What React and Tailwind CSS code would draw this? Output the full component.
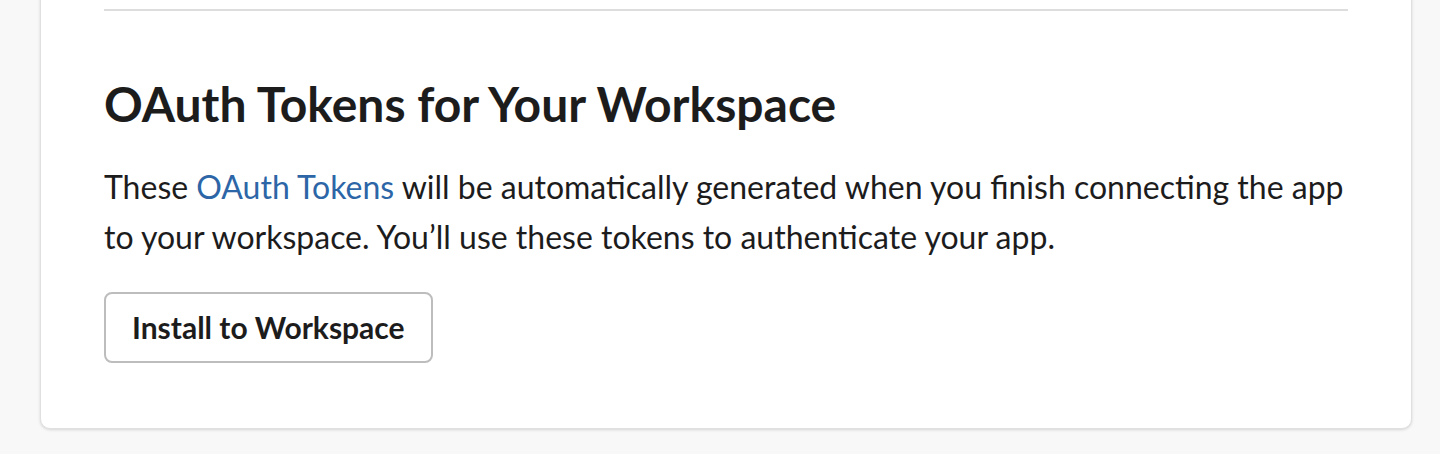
import React from 'react';

export default function App() {
  return (
    <div className="flex flex-col h-[454px] overflow-hidden bg-[#f8f8f8] pl-10 pr-[28px] font-['Lato',sans-serif] text-[#1d1c1d]">
      <div className="-mt-[40px] bg-white border border-[#e0e0e0] rounded-[10px] shadow-[0_1px_3px_rgba(0,0,0,0.14)] px-[63px] pb-[65px]">
        {/* Divider from the previous section */}
        <div className="pt-[48px]">
          <div className="border-t-2 border-[#dddddd]" />
        </div>

        <h2 className="mt-[64px] text-[48px] leading-[58px] font-bold">
          OAuth Tokens for Your Workspace
        </h2>

        <p className="mt-[29px] text-[32px] leading-[50px]">
          These <a href="#" className="text-[#2d66a7]">OAuth Tokens</a> will be automatically generated when you finish connecting the app
          to your workspace. You’ll use these tokens to authenticate your app.
        </p>

        <button className="mt-[30px] h-[71px] px-[26px] border-2 border-[#bdbdbd] rounded-[8px] bg-white text-[30px] font-bold">
          Install to Workspace
        </button>
      </div>
    </div>
  );
}
